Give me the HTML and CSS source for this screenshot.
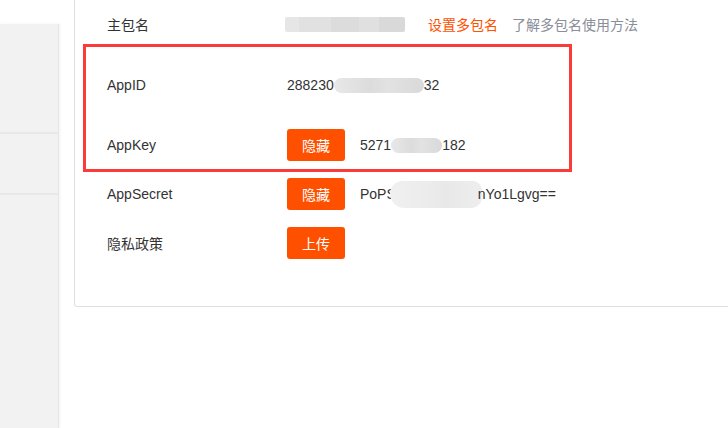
FILE: index.html
```html
<!DOCTYPE html>
<html lang="zh-CN">
<head>
<meta charset="utf-8">
<title>App 信息</title>
<link rel="stylesheet" href="styles.css">
</head>
<body>
<div class="page">
  <aside class="sidebar">
    <div class="side-top"></div>
    <div class="side-panel">
      <div class="side-item s1"></div>
      <div class="side-item s2"></div>
      <div class="side-item s3"></div>
    </div>
  </aside>
  <main class="main">
    <section class="card">
      <div class="row first">
        <div class="label">主包名</div>
        <div class="value">
          <span class="blur blur-pkg"></span>
          <a class="link-orange">设置多包名</a>
          <a class="link-gray">了解多包名使用方法</a>
        </div>
      </div>
      <div class="highlight">
        <div class="row">
          <div class="label">AppID</div>
          <div class="value">288230<span class="blur blur-id"></span>32</div>
        </div>
        <div class="row second">
          <div class="label">AppKey</div>
          <div class="value"><button class="btn">隐藏</button><span class="secret">5271<span class="blur blur-key"></span>182</span></div>
        </div>
      </div>
      <div class="row">
        <div class="label">AppSecret</div>
        <div class="value"><button class="btn">隐藏</button><span class="secret">PoPS<span class="blur blur-sec"></span>nYo1Lgvg==</span></div>
      </div>
      <div class="row privacy">
        <div class="label">隐私政策</div>
        <div class="value"><button class="btn">上传</button></div>
      </div>
    </section>
  </main>
</div>
</body>
</html>
```
FILE: styles.css
```css
* { box-sizing: border-box; }
html, body {
  margin: 0;
  padding: 0;
  background: #fff;
  overflow: hidden;
}
body {
  font-family: "Liberation Sans", "Noto Sans CJK SC", sans-serif;
  font-size: 14px;
  color: #333;
}
.page {
  display: flex;
  width: 728px;
  height: 428px;
}
.sidebar {
  width: 59px;
  flex: none;
  display: flex;
  flex-direction: column;
}
.side-top {
  height: 24px;
  background: #fff;
}
.side-panel {
  flex: 1;
  background: #f2f2f2;
  border-right: 1px solid #e6e6e6;
  box-shadow: 1px 0 3px rgba(0, 0, 0, 0.05);
  display: flex;
  flex-direction: column;
}
.side-item.s1 { height: 110px; border-bottom: 2px solid #e8e8e8; }
.side-item.s2 { height: 61px; border-bottom: 2px solid #e8e8e8; }
.main {
  flex: 1;
  padding-left: 15px;
  min-width: 0;
}
.card {
  width: 680px;
  border: 1px solid #e0e0e0;
  border-top: 0;
  border-radius: 0 0 3px 3px;
  padding: 8px 0 47px 32px;
  background: #fff;
}
.row {
  display: flex;
  align-items: center;
  height: 32px;
}
.label {
  width: 180px;
  flex: none;
}
.value {
  display: flex;
  align-items: center;
  white-space: nowrap;
}
.highlight {
  width: 489px;
  border: 3px solid #fb3a3a;
  margin: 4px 0 6px -24px;
  padding: 22px 0 8px 21px;
}
.highlight .second { margin-top: 28px; }
.privacy { margin-top: 17px; }
.btn {
  width: 58px;
  height: 32px;
  border: 0;
  border-radius: 3px;
  background: #ff5000;
  color: #fff;
  font-family: inherit;
  font-size: 14px;
  padding: 0;
}
.secret {
  margin-left: 15px;
  display: inline-flex;
  align-items: center;
}
.blur {
  display: inline-block;
  height: 15px;
  border-radius: 8px;
  background: linear-gradient(90deg, #e8e8e8, #dcdcdc 40%, #e2e2e2 60%, #d9d9d9);
}
.blur-pkg {
  width: 120px;
  margin-left: -2px;
  border-radius: 2px;
  background: linear-gradient(90deg, #e6e6e6 0 12%, #e1e1e1 12% 38%, #dcdcdc 38% 62%, #e0e0e0 62% 78%, #d9d9d9 78%);
}
.blur-id { width: 90px; }
.blur-key { width: 51px; }
.blur-sec {
  width: 92px;
  height: 27px;
  margin-left: -6px;
  margin-right: -4px;
  border-radius: 14px 10px 12px 16px;
  background: linear-gradient(90deg, #f0f0f0, #ececec 40%, #e8e8e8 60%, #eeeeee);
}
.link-orange {
  color: #ff5000;
  margin-left: 23px;
}
.link-gray {
  color: #8a8e99;
  margin-left: 14px;
}
```
